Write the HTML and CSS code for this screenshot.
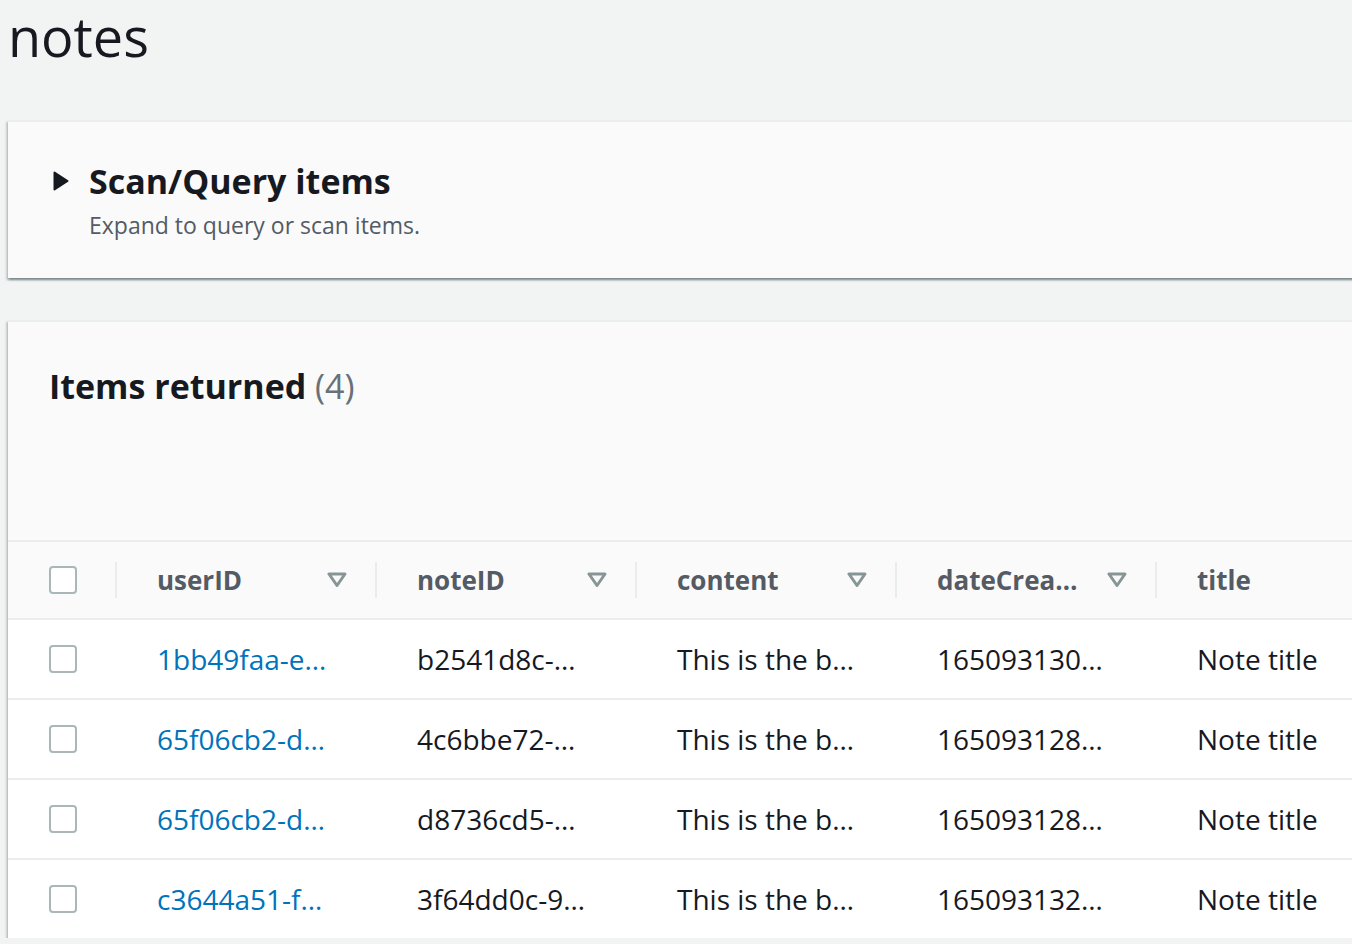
FILE: index.html
```html
<!DOCTYPE html>
<html lang="en">
<head>
<meta charset="utf-8">
<title>notes</title>
<link rel="stylesheet" href="styles.css">
</head>
<body>
<div class="page">
  <h1 class="page-title">notes</h1>

  <section class="panel panel-scan">
    <div class="expander">
      <svg class="expander-icon" width="16" height="20" viewBox="0 0 16 20" aria-hidden="true">
        <polygon points="1.5,1.5 14.5,10 1.5,18.5" fill="#16191f" stroke="#16191f" stroke-width="2" stroke-linejoin="round"/>
      </svg>
      <h2 class="panel-heading">Scan/Query items</h2>
    </div>
    <p class="panel-desc">Expand to query or scan items.</p>
  </section>

  <section class="panel panel-items">
    <div class="items-header">
      <h2 class="panel-heading">Items returned <span class="count">(4)</span></h2>
    </div>
    <div class="table" role="table">
      <div class="row head-row" role="row">
        <div class="cell check-cell"><span class="checkbox"></span></div>
        <div class="cell head-cell"><div class="head-inner"><span>userID</span><svg class="sort" width="20" height="16" viewBox="0 0 20 16"><polygon points="2,2 18,2 10,13.5"/></svg></div></div>
        <div class="cell head-cell"><div class="head-inner"><span>noteID</span><svg class="sort" width="20" height="16" viewBox="0 0 20 16"><polygon points="2,2 18,2 10,13.5"/></svg></div></div>
        <div class="cell head-cell"><div class="head-inner"><span>content</span><svg class="sort" width="20" height="16" viewBox="0 0 20 16"><polygon points="2,2 18,2 10,13.5"/></svg></div></div>
        <div class="cell head-cell"><div class="head-inner"><span>dateCrea…</span><svg class="sort" width="20" height="16" viewBox="0 0 20 16"><polygon points="2,2 18,2 10,13.5"/></svg></div></div>
        <div class="cell head-cell"><div class="head-inner"><span>title</span></div></div>
      </div>

      <div class="row" role="row">
        <div class="cell check-cell"><span class="checkbox"></span></div>
        <div class="cell data-cell"><a class="link" href="#">1bb49faa-e…</a></div>
        <div class="cell data-cell">b2541d8c-…</div>
        <div class="cell data-cell">This is the b…</div>
        <div class="cell data-cell">165093130…</div>
        <div class="cell data-cell">Note title</div>
      </div>
      <div class="row" role="row">
        <div class="cell check-cell"><span class="checkbox"></span></div>
        <div class="cell data-cell"><a class="link" href="#">65f06cb2-d…</a></div>
        <div class="cell data-cell">4c6bbe72-…</div>
        <div class="cell data-cell">This is the b…</div>
        <div class="cell data-cell">165093128…</div>
        <div class="cell data-cell">Note title</div>
      </div>
      <div class="row" role="row">
        <div class="cell check-cell"><span class="checkbox"></span></div>
        <div class="cell data-cell"><a class="link" href="#">65f06cb2-d…</a></div>
        <div class="cell data-cell">d8736cd5-…</div>
        <div class="cell data-cell">This is the b…</div>
        <div class="cell data-cell">165093128…</div>
        <div class="cell data-cell">Note title</div>
      </div>
      <div class="row last-row" role="row">
        <div class="cell check-cell"><span class="checkbox"></span></div>
        <div class="cell data-cell"><a class="link" href="#">c3644a51-f…</a></div>
        <div class="cell data-cell">3f64dd0c-9…</div>
        <div class="cell data-cell">This is the b…</div>
        <div class="cell data-cell">165093132…</div>
        <div class="cell data-cell">Note title</div>
      </div>
    </div>
  </section>
</div>
</body>
</html>
```

FILE: styles.css
```css
html, body {
  margin: 0;
  padding: 0;
}

body {
  background: #f2f3f3;
  color: #16191f;
  font-family: "Open Sans", "Noto Sans", "Liberation Sans", sans-serif;
  overflow: hidden;
}

.page {
  padding-left: 8px;
}

.page-title {
  margin: 0 0 48px 0;
  padding: 0;
  font-size: 54px;
  line-height: 72px;
  font-weight: 400;
  color: #16191f;
}

.panel {
  background: #fafafa;
  border-top: 2px solid #eaeded;
  margin-right: -60px;
  box-shadow: 0 2px 2px 0 rgba(0, 28, 36, 0.3),
              2px 2px 2px 0 rgba(0, 28, 36, 0.15),
              -2px 2px 2px 0 rgba(0, 28, 36, 0.15);
}

.panel-scan {
  padding: 37px 0 37px 45px;
}

.expander {
  display: flex;
  align-items: center;
  gap: 20px;
}

.expander-icon {
  flex: none;
  margin-top: -1px;
}

.panel-heading {
  margin: 0;
  font-size: 34px;
  line-height: 44px;
  font-weight: 700;
  color: #16191f;
}

.panel-desc {
  margin: 6px 0 0 36px;
  font-size: 23px;
  line-height: 32px;
  color: #545b64;
}

.panel-items {
  margin-top: 42px;
}

.items-header {
  padding: 42px 0 132px 41px;
}

.count {
  font-weight: 400;
  color: #687078;
}

.table {
  border-top: 2px solid #eaeded;
}

.row {
  display: grid;
  grid-template-columns: 107px 260px 260px 260px 260px 1fr;
  height: 80px;
  box-sizing: border-box;
  border-bottom: 2px solid #eaeded;
  background: #ffffff;
}

.head-row {
  height: 78px;
  background: #fafafa;
}

.last-row {
  height: 78px;
  border-bottom: none;
}

.cell {
  display: flex;
  align-items: center;
  min-width: 0;
  white-space: nowrap;
  overflow: hidden;
}

.check-cell {
  padding-left: 41px;
}

.checkbox {
  display: block;
  width: 28px;
  height: 28px;
  box-sizing: border-box;
  border: 2px solid #aab7b8;
  border-radius: 4px;
  background: #ffffff;
}

.head-inner {
  display: flex;
  align-items: center;
  justify-content: space-between;
  width: 100%;
  height: 36px;
  box-sizing: border-box;
  border-left: 2px solid #eaeded;
  padding: 0 28px 0 40px;
  font-size: 26px;
  font-weight: 700;
  color: #545b64;
}

.sort {
  flex: none;
}

.sort polygon {
  fill: none;
  stroke: #879596;
  stroke-width: 3;
  stroke-linejoin: round;
}

.data-cell {
  padding-left: 42px;
  font-size: 28px;
  color: #16191f;
}

.link {
  color: #0073bb;
  text-decoration: none;
}
```
